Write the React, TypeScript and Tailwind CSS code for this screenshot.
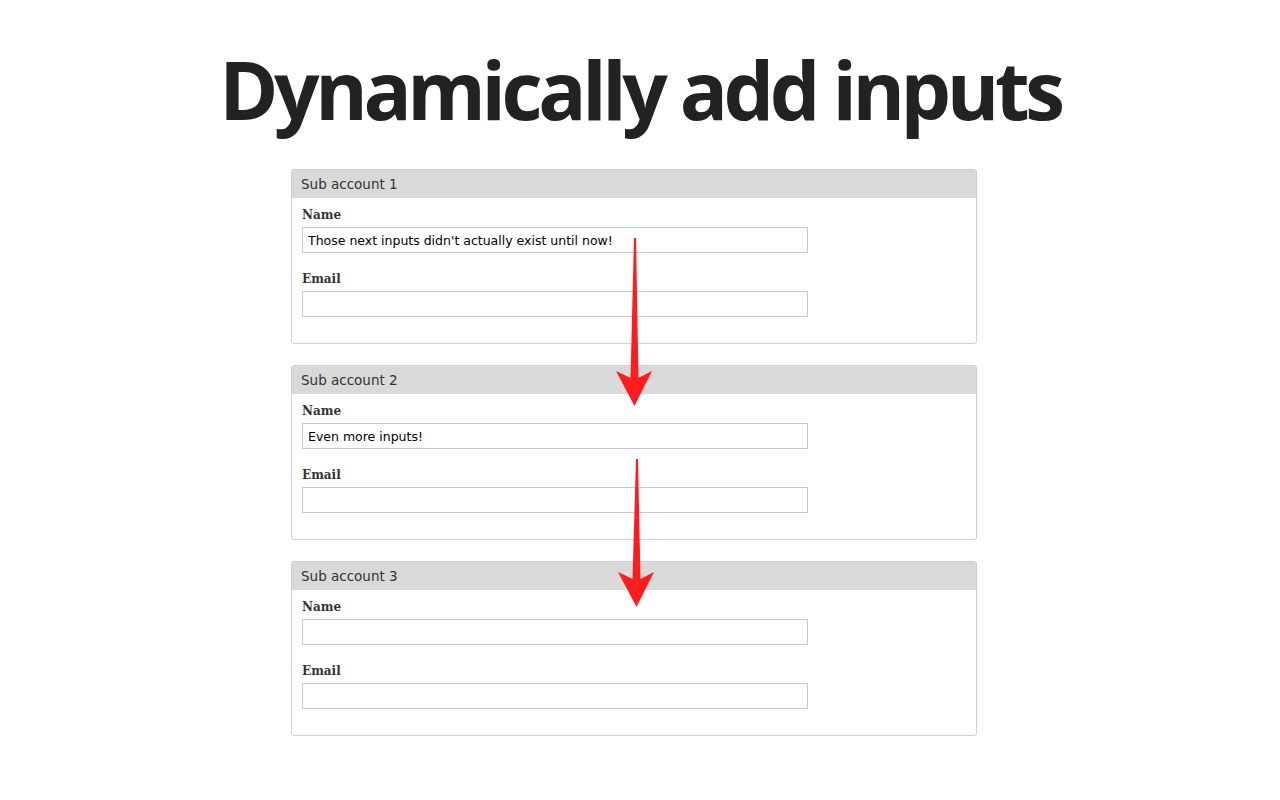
import React from "react";

interface Field {
  label: string;
  value: string;
}

interface Account {
  title: string;
  fields: Field[];
}

const accounts: Account[] = [
  {
    title: "Sub account 1",
    fields: [
      { label: "Name", value: "Those next inputs didn't actually exist until now!" },
      { label: "Email", value: "" },
    ],
  },
  {
    title: "Sub account 2",
    fields: [
      { label: "Name", value: "Even more inputs!" },
      { label: "Email", value: "" },
    ],
  },
  {
    title: "Sub account 3",
    fields: [
      { label: "Name", value: "" },
      { label: "Email", value: "" },
    ],
  },
];

// thin tapering shaft with a wide head; length is the full height in px
function Arrow({ length, className }: { length: number; className: string }) {
  const base = length - 35;
  const d = `M19 0 L21 0 L23.5 ${base + 7} L37 ${base} L19.5 ${length} L1 ${base} L15.5 ${base + 7} Z`;
  return (
    <svg className={className} viewBox={`0 0 40 ${length}`} width="40" height={length}>
      <path d={d} fill="#ff1c1c" />
    </svg>
  );
}

function AccountPanel({ account }: { account: Account }) {
  return (
    <div className="overflow-hidden rounded-[3px] border border-[#cfcfcf] bg-white">
      <div className="flex h-[28px] items-center bg-[#d9d9d9] px-[9px] font-['DejaVu_Sans',sans-serif] text-[13.5px] text-[#333]">
        {account.title}
      </div>
      <div className="px-[10px] pt-[8px] pb-[26px]">
        {account.fields.map((field, i) => (
          <div key={field.label} className={i > 0 ? "mt-[17px]" : ""}>
            <label className="block h-[18px] font-['DejaVu_Serif',serif] text-[12px] leading-[18px] font-bold text-[#333]">
              {field.label}
            </label>
            <input
              readOnly
              value={field.value}
              className="mt-[3px] block h-[26px] w-[506px] border border-[#c9c9c9] px-[5px] font-['DejaVu_Sans',sans-serif] text-[12.5px] text-black outline-none"
            />
          </div>
        ))}
      </div>
    </div>
  );
}

export default function App() {
  return (
    <div className="relative min-h-[800px] w-full bg-white">
      <h1 className="pt-[49px] text-center font-['Open_Sans',sans-serif] text-[80px] leading-none font-bold tracking-[-4.4px] text-[#222]">
        Dynamically add inputs
      </h1>
      <div className="mt-[40px] ml-[291px] flex w-[686px] flex-col gap-[21px]">
        {accounts.map((account) => (
          <AccountPanel key={account.title} account={account} />
        ))}
      </div>
      <Arrow length={168} className="absolute top-[238px] left-[615px]" />
      <Arrow length={148} className="absolute top-[459px] left-[617px]" />
    </div>
  );
}
